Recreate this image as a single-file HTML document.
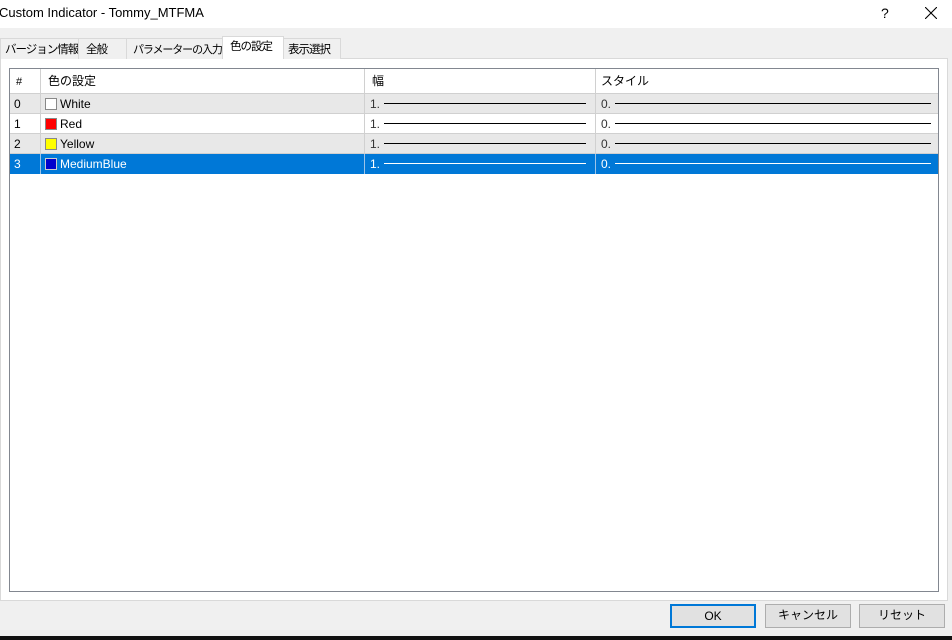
<!DOCTYPE html><html><head><meta charset="utf-8"><style>
*{margin:0;padding:0;box-sizing:border-box}
body{width:952px;height:640px;background:#f0f0f0;font-family:"Liberation Sans","Noto Sans CJK JP",sans-serif;font-size:12px;line-height:14px;color:#000;position:relative;overflow:hidden}
.a{position:absolute}
.title{left:0;top:0;width:952px;height:28px;background:#fff}
.tab{top:38px;height:21px;border:1px solid #d9d9d9;border-bottom:none;background:#f0f0f0;padding:4px 0 0 4px;white-space:nowrap;font-size:11.5px;letter-spacing:-1px;overflow:hidden}
.panel{left:0;top:58px;width:948px;height:543px;background:#fff;border:1px solid #d9d9d9}
.list{left:9px;top:68px;width:930px;height:524px;border:1px solid #828790;background:#fff}
.row{left:10px;width:928px;height:20px}
.cell{position:absolute;top:0;height:20px;border-left:1px solid #d0d0d0;padding:3px 0 0 6px;white-space:nowrap}
.sw{display:inline-block;width:12px;height:12px;border:1px solid #888;vertical-align:-2px;margin-right:3px}
.ln{position:absolute;top:9px;height:1px;background:#000}
.btn{top:604px;height:24px;border:1px solid #adadad;background:#e1e1e1;text-align:center;padding-top:4px}
</style></head><body>
<div class="a title"><span class="a" style="left:-1px;top:6px;font-size:13px">Custom Indicator - Tommy_MTFMA</span>
<span class="a" style="left:881px;top:6px;font-size:14px">?</span>
<svg class="a" style="left:925px;top:7px" width="12" height="12"><path d="M0 0L12 12M12 0L0 12" stroke="#000" stroke-width="1.1"/></svg></div>
<div class="a panel"></div>
<div class="a tab" style="left:0;width:79px;padding-left:4px">バージョン情報</div>
<div class="a tab" style="left:78px;width:49px;padding-left:7px">全般</div>
<div class="a tab" style="left:126px;width:97px;padding-left:6px;font-size:11px;letter-spacing:-1.1px">パラメーターの入力</div>
<div class="a tab" style="left:222px;top:36px;height:23px;width:62px;background:#fff;padding:3px 0 0 7px">色の設定</div>
<div class="a tab" style="left:283px;width:58px">表示選択</div>
<div class="a list"></div>
<div class="a row" style="top:69px;height:25px;border-bottom:1px solid #d0d0d0">
<div class="cell" style="left:0;width:30px;border:none;padding-top:6px;font-size:11px">#</div>
<div class="cell" style="left:30px;width:324px;height:25px;padding:5px 0 0 7px">色の設定</div>
<div class="cell" style="left:354px;width:231px;height:25px;padding:5px 0 0 7px">幅</div>
<div class="cell" style="left:585px;width:343px;height:25px;padding:5px 0 0 5px">スタイル</div></div>
<div class="a row" style="top:94px;background:#e8e8e8;border-bottom:1px solid #d0d0d0"><div class="cell" style="left:0;border:none;padding-left:4px">0</div><div class="cell" style="left:30px;width:324px;padding-left:4px"><span class="sw" style="background:#fff"></span>White</div><div class="cell" style="left:354px;width:231px;padding-left:5px;color:#333">1.<div class="ln" style="left:19px;width:202px"></div></div><div class="cell" style="left:585px;width:343px;padding-left:5px;color:#333">0.<div class="ln" style="left:19px;width:316px"></div></div></div>
<div class="a row" style="top:114px;background:#fff;border-bottom:1px solid #d0d0d0"><div class="cell" style="left:0;border:none;padding-left:4px">1</div><div class="cell" style="left:30px;width:324px;padding-left:4px"><span class="sw" style="background:#f00"></span>Red</div><div class="cell" style="left:354px;width:231px;padding-left:5px;color:#333">1.<div class="ln" style="left:19px;width:202px"></div></div><div class="cell" style="left:585px;width:343px;padding-left:5px;color:#333">0.<div class="ln" style="left:19px;width:316px"></div></div></div>
<div class="a row" style="top:134px;background:#e8e8e8;border-bottom:1px solid #d0d0d0"><div class="cell" style="left:0;border:none;padding-left:4px">2</div><div class="cell" style="left:30px;width:324px;padding-left:4px"><span class="sw" style="background:#ff0"></span>Yellow</div><div class="cell" style="left:354px;width:231px;padding-left:5px;color:#333">1.<div class="ln" style="left:19px;width:202px"></div></div><div class="cell" style="left:585px;width:343px;padding-left:5px;color:#333">0.<div class="ln" style="left:19px;width:316px"></div></div></div>
<div class="a row" style="top:154px;background:#0078d7;color:#fff"><div class="cell" style="left:0;border:none;padding-left:4px">3</div><div class="cell" style="left:30px;width:324px;padding-left:4px;border-color:#9cc3e8"><span class="sw" style="background:#0000cd;border-color:#ccc"></span>MediumBlue</div><div class="cell" style="left:354px;width:231px;padding-left:5px;border-color:#9cc3e8">1.<div class="ln" style="left:19px;width:202px;background:#fff"></div></div><div class="cell" style="left:585px;width:343px;padding-left:5px;border-color:#9cc3e8">0.<div class="ln" style="left:19px;width:316px;background:#fff"></div></div></div>
<div class="a btn" style="left:670px;width:86px;border:2px solid #0078d7;padding-top:3px">OK</div>
<div class="a btn" style="left:765px;width:86px;padding-top:3px">キャンセル</div>
<div class="a btn" style="left:859px;width:86px;padding-top:3px">リセット</div>
<div class="a" style="left:0;top:636px;width:952px;height:4px;background:#111"></div>
</body></html>
